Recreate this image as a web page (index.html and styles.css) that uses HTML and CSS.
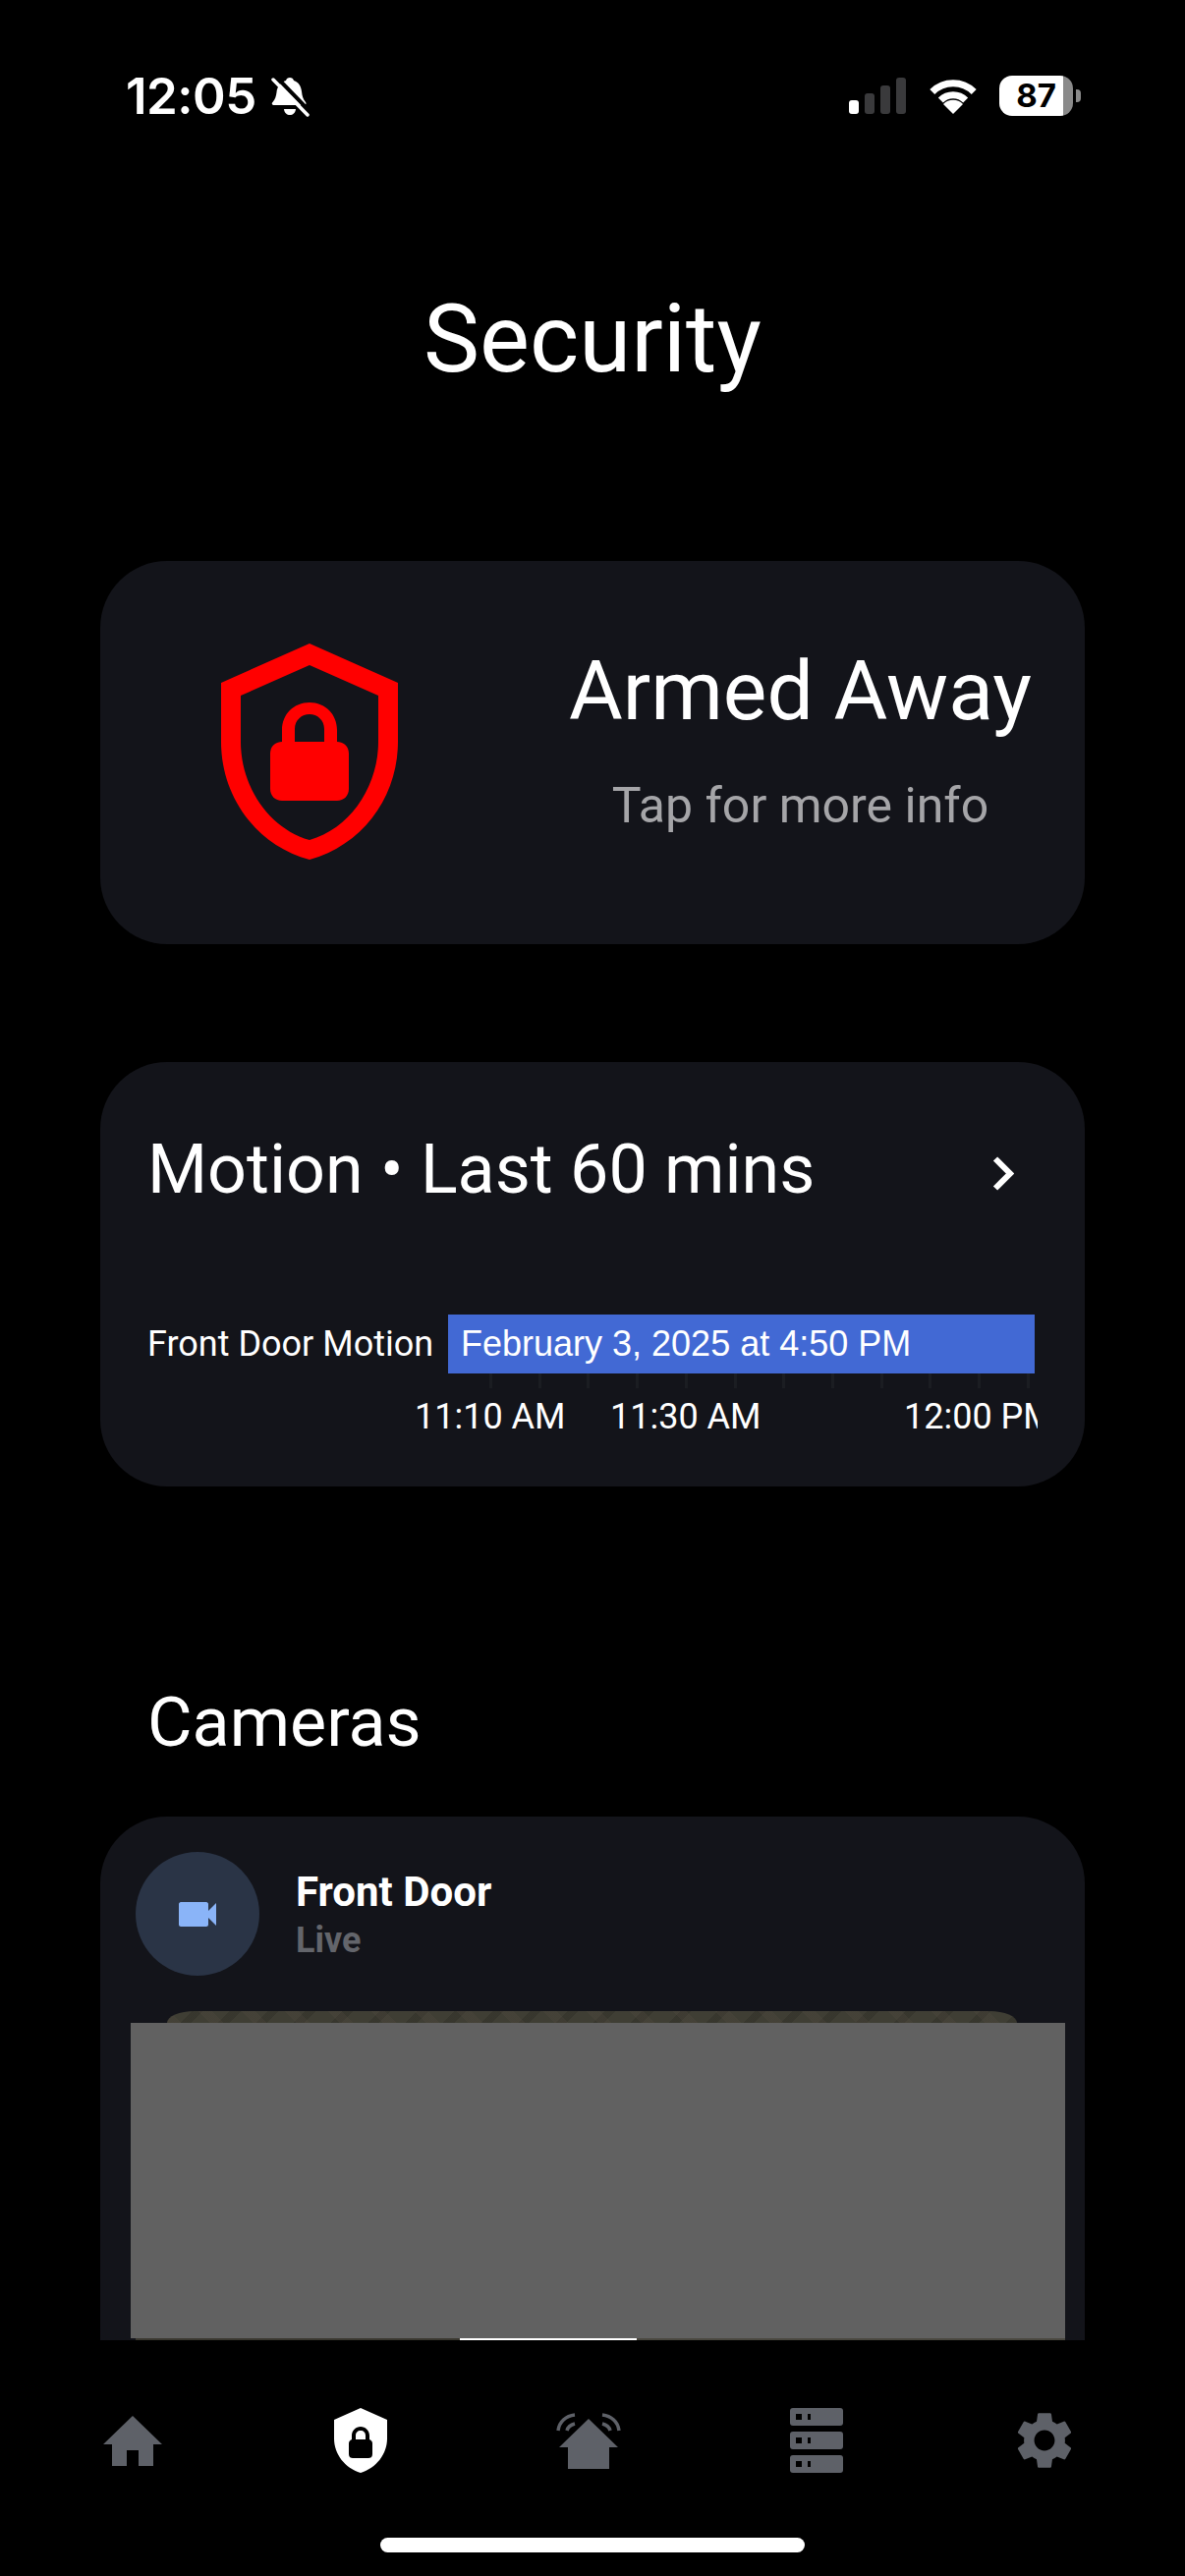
FILE: index.html
```html
<!DOCTYPE html>
<html lang="en">
<head>
<meta charset="UTF-8">
<meta name="viewport" content="width=device-width, initial-scale=1.0">
<title>Security</title>
<link rel="stylesheet" href="styles.css">
</head>
<body>
<div class="phone">

<div class="status-bar">
<div class="status-left">
<span class="clock">12:05</span>
<svg class="bell" viewBox="0 0 40 41">
<path fill="#fff" d="M20 1c2 0 3.5 1 4 3 5 1.5 7.5 6 8 11 .5 5 1.5 8 4 11 1 1.5.5 3-1.5 3H4c-2 0-3-1.500-1.500-3 2.500-3 3.500-6 4-10 .5-6 4-10 9.500-12 .5-2 2-3 4-3z"/>
<path fill="#fff" d="M14 33h12c-.5 4-3 6-6 6s-5.500-2-6-6z"/>
<path stroke="#000" stroke-width="4" d="M6 0l34 35"/>
<path stroke="#fff" stroke-width="3.500" stroke-linecap="round" d="M3 3l35 36"/>
</svg>
</div>
<div class="status-right">
<div class="signal">
<span class="bar on"></span>
<span class="bar bar2"></span>
<span class="bar bar3"></span>
<span class="bar bar4"></span>
</div>
<svg class="wifi" viewBox="0 0 50 37">
<path fill="none" stroke="#fff" stroke-width="7" d="M3.800 14.500a30 30 0 0 1 42.400 0"/>
<path fill="none" stroke="#fff" stroke-width="7" d="M12.300 23a18 18 0 0 1 25.400 0"/>
<path fill="#fff" d="M25 37l-10-10a14 14 0 0 1 20 0z"/>
</svg>
<div class="battery"><span>87</span></div>
<div class="battery-nub"></div>
</div>
</div>

<main class="screen">
<h1 class="page-title">Security</h1>

<section class="card status-card">
<svg class="shield" viewBox="0 0 180 220">
<path fill="#f00" fill-rule="evenodd" d="M90 0l90 40v60c0 55-35 105-90 120C35 205 0 155 0 100V40zM90 22L20 53v47c0 45 28 88 70 100 42-12 70-55 70-100V53z"/>
<path fill="#f00" fill-rule="evenodd" d="M62 100V88c0-16 12-28 28-28s28 12 28 28v12c7 0 12 5 12 12v36c0 7-5 12-12 12H62c-7 0-12-5-12-12v-36c0-7 5-12 12-12zM75 100h30V87c0-9-7-15-15-15s-15 6-15 15z"/>
</svg>
<div class="status-text">
<div class="status-name">Armed Away</div>
<div class="status-hint">Tap for more info</div>
</div>
</section>

<section class="card motion-card">
<div class="motion-head">
<h2 class="heading">Motion • Last 60 mins</h2>
<svg class="chevron" viewBox="0 0 22 35"><path fill="none" stroke="#fff" stroke-width="6" d="M3 2.500l15 15-15 15"/></svg>
</div>
<div class="chart-row">
<div class="chart-label">Front Door Motion</div>
<div class="chart-bar">February 3, 2025 at 4:50 PM</div>
</div>
<div class="chart-ticks"></div>
<div class="chart-axis">
<span>11:10 AM</span>
<span>11:30 AM</span>
<span>12:00 PM</span>
</div>
</section>

<h2 class="heading section-title">Cameras</h2>

<section class="card camera-card">
<div class="camera-head">
<div class="camera-badge">
<svg viewBox="0 0 38 25"><path fill="#8ab4f8" d="M2 0h26c1 0 2 1 2 2v7l8-8v23l-8-8v7c0 1-1 2-2 2H2c-1 0-2-1-2-2V2c0-1 1-2 2-2z"/></svg>
</div>
<div>
<div class="camera-name">Front Door</div>
<div class="camera-state">Live</div>
</div>
</div>
<div class="camera-frame">
<div class="camera-top"></div>
<div class="camera-hidden"></div>
<div class="camera-bottom"></div>
</div>
</section>
</main>

<nav class="tab-bar">
<div class="tab">
<svg width="60" height="51" viewBox="0 0 60 51"><path fill="#5e6168" d="M30 0l30 29H51v22H36V35H24v16H9V29H0z"/></svg>
</div>
<div class="tab">
<svg width="54" height="66" viewBox="0 0 54 66"><path fill="#fff" fill-rule="evenodd" d="M27 0l27 12v19c0 16-11 30-27 35C11 61 0 47 0 31V12zM18 32v-4c0-5 4-9 9-9s9 4 9 9v4c2 1 3 2 3 4v11c0 3-2 4-4 4H19c-2 0-4-1-4-4V36c0-2 1-3 3-4zM22 32h10v-4c0-3-2-5-5-5s-5 2-5 5z"/></svg>
</div>
<div class="tab">
<svg width="66" height="57" viewBox="0 0 66 57">
<path fill="#5e6168" d="M33 6l30 29h-9v22H12V35H3z"/>
<path fill="none" stroke="#5e6168" stroke-width="3.500" d="M19 2C10 3 3 9 2 18M19 11c-4 1-7 3-8 7M47 2c9 1 16 7 17 16M47 11c4 1 7 3 8 7"/>
</svg>
</div>
<div class="tab">
<div class="server">
<div class="server-row"><span class="led"></span><span class="led-thin"></span></div>
<div class="server-row"><span class="led"></span><span class="led-thin"></span></div>
<div class="server-row"><span class="led"></span><span class="led-thin"></span></div>
</div>
</div>
<div class="tab">
<svg width="58" height="60" viewBox="0 0 24 24"><path fill="#5e6168" fill-rule="evenodd" transform="translate(12 12) scale(1.2) translate(-12 -12)" d="M19.140 12.940c.04-.3.060-.61.060-.94 0-.32-.02-.64-.07-.94l2.030-1.580c.18-.14.230-.41.120-.61l-1.920-3.320c-.12-.22-.37-.29-.59-.22l-2.390.96c-.5-.38-1.030-.7-1.620-.94l-.36-2.540c-.04-.24-.24-.41-.48-.41h-3.840c-.24 0-.43.170-.47.410l-.36 2.540c-.59.240-1.130.570-1.620.94l-2.390-.96c-.22-.08-.47 0-.59.220L2.740 8.870c-.12.210-.08.470.12.610l2.030 1.580c-.05.3-.09.630-.09.940s.02.640.07.940l-2.030 1.580c-.18.140-.23.410-.12.610l1.920 3.320c.12.220.37.290.59.220l2.390-.96c.5.380 1.030.7 1.620.94l.36 2.540c.05.240.24.410.48.410h3.840c.24 0 .44-.17.470-.41l.36-2.540c.59-.24 1.130-.56 1.620-.94l2.390.96c.22.080.47 0 .59-.22l1.920-3.320c.12-.22.070-.47-.12-.61l-2.010-1.580zM12 15.600c-1.980 0-3.600-1.620-3.600-3.600s1.620-3.600 3.600-3.600 3.600 1.620 3.600 3.600-1.620 3.600-3.600 3.600z"/></svg>
</div>
<div class="home-indicator"></div>
</nav>

</div>
</body>
</html>
```

FILE: styles.css
```css
* {
box-sizing: border-box;
}

body {
margin: 0;
background-color: #000;
color: #fff;
font-family: Roboto, "Liberation Sans", sans-serif;
}

h1, h2 {
margin: 0;
font-weight: 400;
}

.phone {
width: 1206px;
height: 2622px;
display: flex;
flex-direction: column;
overflow: hidden;
}

/* status bar */
.status-bar {
height: 150px;
flex: none;
display: flex;
justify-content: space-between;
padding: 69px 106px 0 128px;
}

.status-left {
display: flex;
align-items: flex-start;
gap: 14px;
}

.clock {
font-family: Inter, sans-serif;
font-size: 51px;
font-weight: 600;
line-height: 58px;
letter-spacing: -0.5px;
}

.bell {
width: 40px;
height: 41px;
margin-top: 9px;
}

.status-right {
display: flex;
align-items: flex-start;
padding-top: 8px;
}

.signal {
display: flex;
align-items: flex-end;
gap: 6px;
height: 37px;
margin-top: 2px;
}

.bar {
width: 10px;
height: 14px;
border-radius: 3px;
background-color: #3a3a3c;
}

.bar.on {
background-color: #fff;
}

.bar2 {
height: 21px;
}

.bar3 {
height: 29px;
}

.bar4 {
height: 37px;
}

.wifi {
width: 50px;
height: 37px;
margin: 2px 22px 0 23px;
}

.battery {
width: 75px;
height: 41px;
border-radius: 13px;
background: linear-gradient(90deg, #fff 0 65px, #8a8a8a 65px);
color: #000;
font-family: Inter, sans-serif;
font-size: 33px;
font-weight: 700;
line-height: 41px;
text-align: center;
}

.battery-nub {
width: 5px;
height: 13px;
margin: 14px 0 0 3px;
border-radius: 0 4px 4px 0;
background-color: #8a8a8a;
}

/* page */
.screen {
flex: 1;
min-height: 0;
overflow: hidden;
}

.page-title {
height: 421px;
padding-top: 135px;
font-size: 96px;
line-height: 120px;
text-align: center;
}

.card {
margin: 0 102px;
background-color: #13141a;
border-radius: 68px;
}

.status-card {
height: 390px;
display: flex;
align-items: center;
justify-content: space-between;
padding: 0 54px 0 123px;
}

.shield {
width: 180px;
height: 220px;
margin-top: -2px;
}

.status-text {
text-align: center;
margin-bottom: 24px;
}

.status-name {
font-size: 84px;
line-height: 96px;
}

.status-hint {
margin-top: 36px;
font-size: 50px;
line-height: 64px;
color: #a5a5a8;
}

.motion-card {
height: 432px;
margin-top: 120px;
padding: 0 48px;
}

.motion-head {
height: 257px;
display: flex;
justify-content: space-between;
padding: 66px 24px 0 0;
}

.heading {
font-size: 70px;
line-height: 86px;
}

.chevron {
width: 22px;
height: 35px;
margin-top: 30px;
}

.chart-row {
display: flex;
align-items: center;
height: 60px;
font-size: 36px;
}

.chart-label {
width: 306px;
}

.chart-bar {
width: 597px;
height: 60px;
padding-left: 13px;
font-family: "Liberation Sans", Arial, sans-serif;
line-height: 60px;
background-color: #4269d4;
}

.chart-ticks {
height: 15px;
margin: 0 3px 0 348px;
background: repeating-linear-gradient(90deg, #1b1d22 0 3px, transparent 3px 49.700px);
}

.chart-axis {
display: grid;
grid-template-columns: 199px 299px 136px;
width: 634px;
margin: 8px 0 0 272px;
overflow: hidden;
font-size: 36px;
line-height: 42px;
white-space: nowrap;
}

.section-title {
padding: 197px 0 0 150px;
height: 336px;
}

.camera-card {
height: 700px;
padding: 36px 20px 0 31px;
border-radius: 68px 68px 0 0;
}

.camera-head {
display: flex;
align-items: center;
gap: 37px;
padding-left: 5px;
}

.camera-badge {
width: 126px;
height: 126px;
flex: none;
display: flex;
align-items: center;
justify-content: center;
border-radius: 50%;
background-color: #2a3446;
}

.camera-badge svg {
width: 38px;
height: 25px;
}

.camera-name {
font-size: 42px;
font-weight: 700;
line-height: 50px;
}

.camera-state {
font-size: 36px;
font-weight: 700;
line-height: 42px;
margin-top: 3px;
color: #63656b;
}

.camera-frame {
margin-top: 36px;
}

.camera-top {
height: 12px;
margin: 0 49px 0 37px;
border-radius: 28px 28px 0 0 / 12px 12px 0 0;
background:
repeating-linear-gradient(45deg, rgba(90, 80, 70, 0.2) 0 10px, transparent 10px 31px),
repeating-linear-gradient(-45deg, rgba(25, 25, 20, 0.2) 0 8px, transparent 8px 27px),
#3f3e34;
}

.camera-hidden {
height: 321px;
background-color: #616161;
}

.camera-bottom {
height: 2px;
margin-left: 5px;
background: linear-gradient(90deg, #3a3830 0 330px, #fff 330px 510px, #4a4840 510px);
}

/* bottom tabs */
.tab-bar {
position: relative;
height: 240px;
flex: none;
display: grid;
grid-template-columns: repeat(5, 232px);
padding: 69px 0 0 19px;
align-items: start;
}

.tab {
display: flex;
justify-content: center;
height: 66px;
align-items: center;
}

.server {
width: 54px;
display: flex;
flex-direction: column;
gap: 6px;
}

.server-row {
height: 18px;
display: flex;
align-items: center;
gap: 5px;
padding-left: 6px;
border-radius: 3px;
background-color: #5e6168;
}

.led {
width: 6px;
height: 6px;
background-color: #000;
}

.led-thin {
width: 3px;
height: 6px;
margin-left: 1px;
background-color: #000;
}

.home-indicator {
position: absolute;
left: 387px;
bottom: 24px;
width: 432px;
height: 15px;
border-radius: 8px;
background-color: #fff;
}
```
